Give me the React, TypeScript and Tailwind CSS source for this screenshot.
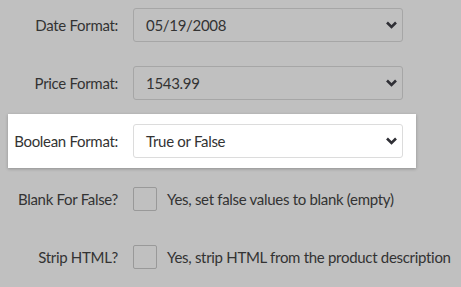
import React from "react";

function Chevron() {
  return (
    <svg width="11" height="8" viewBox="0 0 11 8" className="absolute right-0 top-1/2 -translate-y-1/2">
      <path d="M1 1.5 L5.5 6 L10 1.5" fill="none" stroke="#2f2f35" strokeWidth="2.6" strokeLinecap="butt" strokeLinejoin="miter" />
    </svg>
  );
}

function Select({ value, white }: { value: string; white?: boolean }) {
  return (
    <div
      className={
        "relative w-[270px] h-[34px] rounded-[3px] border flex items-center pl-[12px] text-[#333] " +
        (white ? "border-[#dcdcdc] bg-white" : "border-[#a6a6a6]")
      }
    >
      <span>{value}</span>
      <div className="absolute right-[5px] top-0 bottom-0 w-[11px]">
        <Chevron />
      </div>
    </div>
  );
}

function Checkbox() {
  return <div className="w-[24px] h-[24px] border border-[#999] rounded-[2px] shrink-0" />;
}

function Label({ children, w = "w-[118px]" }: { children: React.ReactNode; w?: string }) {
  return <div className={w + " flex justify-end whitespace-nowrap shrink-0"}>{children}</div>;
}

export default function App() {
  return (
    <div
      className="w-[461px] h-[287px] bg-[#c0c0c0] pt-[8px] text-[15px] tracking-[-0.3px] text-[#333] overflow-hidden"
      style={{ fontFamily: '"Source Sans Pro", Lato, "Noto Sans", sans-serif' }}
    >
      <div className="flex flex-col gap-[24px]">
        <div className="flex items-center h-[34px]">
          <Label>Date Format:</Label>
          <div className="ml-[15px]">
            <Select value="05/19/2008" />
          </div>
        </div>
        <div className="flex items-center h-[34px]">
          <Label>Price Format:</Label>
          <div className="ml-[15px]">
            <Select value="1543.99" />
          </div>
        </div>
        <div className="-my-[10px] py-[10px] ml-[8px] w-[408px] bg-white shadow-[0_1px_3px_rgba(0,0,0,0.25)]">
          <div className="flex items-center h-[34px]">
            <Label w="w-[110px]">Boolean Format:</Label>
            <div className="ml-[15px]">
              <Select value="True or False" white />
            </div>
          </div>
        </div>
        <div className="flex items-center h-[34px]">
          <Label>Blank For False?</Label>
          <div className="ml-[15px] flex items-center">
            <Checkbox />
            <span className="ml-[10px] whitespace-nowrap">Yes, set false values to blank (empty)</span>
          </div>
        </div>
        <div className="flex items-center h-[34px]">
          <Label>Strip HTML?</Label>
          <div className="ml-[15px] flex items-center">
            <Checkbox />
            <span className="ml-[10px] whitespace-nowrap">Yes, strip HTML from the product description</span>
          </div>
        </div>
      </div>
    </div>
  );
}
